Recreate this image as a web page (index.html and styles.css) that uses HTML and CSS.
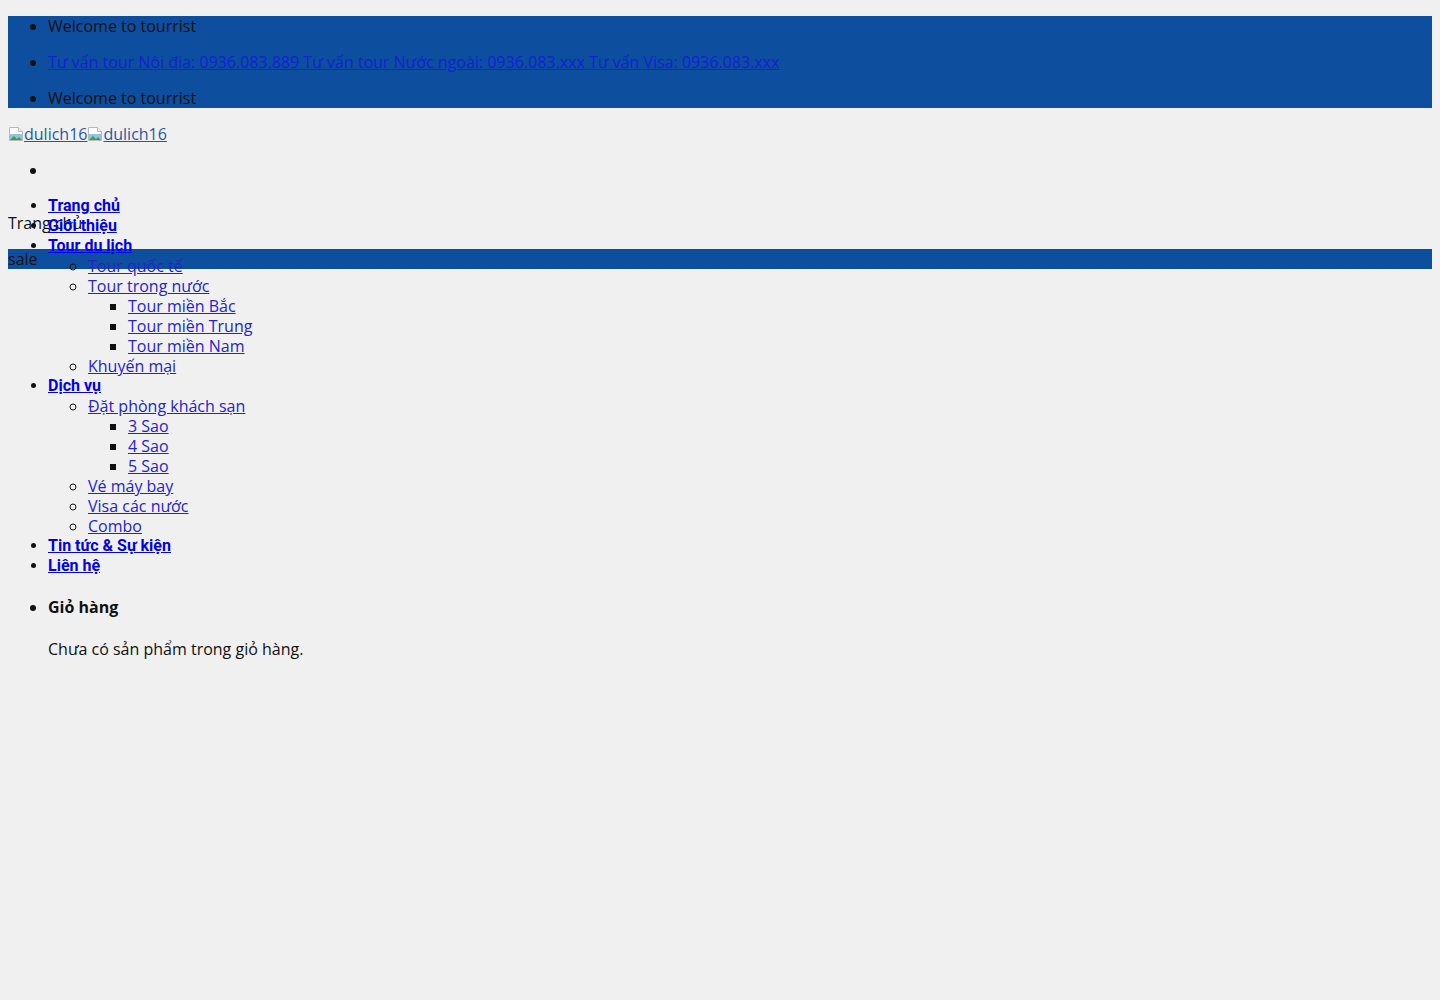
FILE: index.html
```html
<!DOCTYPE html>
<html lang="vi">
<head>
    <meta charset="UTF-8">
    <meta name="viewport" content="width=device-width, initial-scale=1.0">
    <title>dulich16</title>
    <link rel="stylesheet" href="styles.css">
</head>
<body>

<ul class="topbar">
    <li>Welcome to tourrist</li>
    <li><a href="#">Tư vấn tour Nội địa: 0936.083.889 Tư vấn tour Nước ngoài: 0936.083.xxx Tư vấn Visa: 0936.083.xxx</a></li>
    <li>Welcome to tourrist</li>
</ul>

<div class="logo">
    <a href="#"><svg class="broken" viewBox="0 0 16 16"><path d="M1.5 1.5h9l4 4v9h-13z" fill="#fff" stroke="#b8b8b8"/><path d="M10.5 1.5v4h4" fill="#eee" stroke="#b8b8b8"/><path d="M2 8h12v6H2z" fill="#8fc4ea"/><path d="M2 14l4-4 3 3 2-2 3 3z" fill="#4a9b3c"/></svg>dulich16</a><a href="#"><svg class="broken" viewBox="0 0 16 16"><path d="M1.5 1.5h9l4 4v9h-13z" fill="#fff" stroke="#b8b8b8"/><path d="M10.5 1.5v4h4" fill="#eee" stroke="#b8b8b8"/><path d="M2 8h12v6H2z" fill="#8fc4ea"/><path d="M2 14l4-4 3 3 2-2 3 3z" fill="#4a9b3c"/></svg>dulich16</a>
</div>

<ul class="search">
    <li></li>
</ul>

<div class="main">
    <div class="crumbs">
        <div class="crumb">Trang chủ</div>
        <div class="page-title">sale</div>
    </div>

    <ul class="nav">
        <li><a href="#">Trang chủ</a></li>
        <li><a href="#">Giới thiệu</a></li>
        <li><a href="#">Tour du lịch</a>
            <ul>
                <li><a href="#">Tour quốc tế</a></li>
                <li><a href="#">Tour trong nước</a>
                    <ul>
                        <li><a href="#">Tour miền Bắc</a></li>
                        <li><a href="#">Tour miền Trung</a></li>
                        <li><a href="#">Tour miền Nam</a></li>
                    </ul>
                </li>
                <li><a href="#">Khuyến mại</a></li>
            </ul>
        </li>
        <li><a href="#">Dịch vụ</a>
            <ul>
                <li><a href="#">Đặt phòng khách sạn</a>
                    <ul>
                        <li><a href="#">3 Sao</a></li>
                        <li><a href="#">4 Sao</a></li>
                        <li><a href="#">5 Sao</a></li>
                    </ul>
                </li>
                <li><a href="#">Vé máy bay</a></li>
                <li><a href="#">Visa các nước</a></li>
                <li><a href="#">Combo</a></li>
            </ul>
        </li>
        <li><a href="#">Tin tức &amp; Sự kiện</a></li>
        <li><a href="#">Liên hệ</a></li>
    </ul>
</div>

<ul class="cart">
    <li>
        <div class="cart-title">Giỏ hàng</div>
        <p class="cart-empty">Chưa có sản phẩm trong giỏ hàng.</p>
    </li>
</ul>

</body>
</html>
```

FILE: styles.css
```css
body {
    margin: 0 8px 8px;
    background: #f0f0f0;
    font-family: 'Open Sans', sans-serif;
    font-size: 16px;
    line-height: 20px;
    color: #111;
}

ul {
    margin: 16px 0;
    padding-left: 40px;
}

.topbar {
    background: #0e4e9e;
}

.topbar li + li {
    margin-top: 16px;
}

.topbar a {
    color: #0f23d8;
}

.logo {
    margin: 16px 0;
    height: 20px;
}

.logo a {
    color: #1e5a9e;
}

.broken {
    width: 16px;
    height: 16px;
    vertical-align: -2px;
}

.search {
    margin-bottom: 0;
}

.search li {
    height: 20px;
}

.main {
    display: grid;
    margin-top: 16px;
}

.main > * {
    grid-area: 1 / 1;
}

.crumbs {
    padding-top: 17px;
}

.page-title {
    margin-top: 16px;
    background: #0e4e9e;
}

.nav {
    margin: 0;
}

.nav > li {
    font-family: 'Roboto', sans-serif;
    font-weight: bold;
}

.nav > li > a {
    color: #0000ee;
}

.nav ul {
    margin: 0;
    list-style: circle;
    font-family: 'Open Sans', sans-serif;
    font-weight: normal;
}

.nav ul ul {
    list-style: square;
}

.nav ul a {
    color: #2323d0;
}

.cart {
    margin-top: 21px;
}

.cart-title {
    font-weight: bold;
}

.cart-empty {
    margin: 22px 0 0;
}
```
